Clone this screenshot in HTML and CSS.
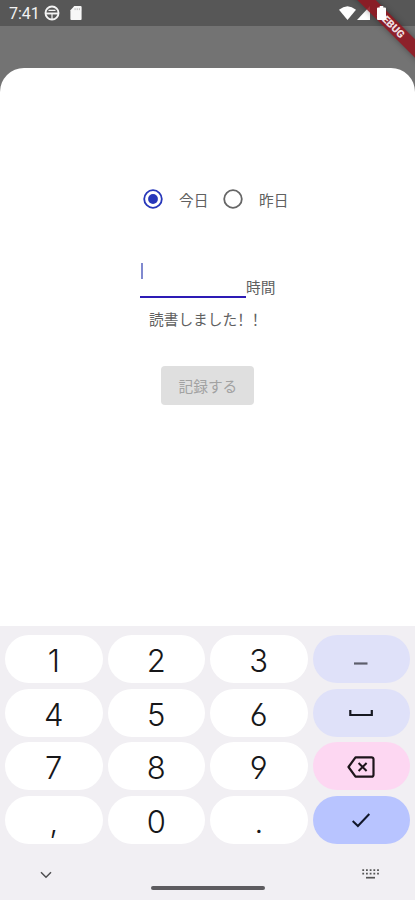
FILE: index.html
```html
<!DOCTYPE html>
<html lang="ja">
<head>
<meta charset="utf-8">
<meta name="viewport" content="width=device-width, initial-scale=1">
<title>読書記録</title>
<link rel="stylesheet" href="styles.css">
</head>
<body>
<div class="screen">
  <header class="status">
    <span class="clock">7:41</span>
    <svg class="globe" viewBox="0 0 16 16"><circle cx="8" cy="8" r="6.500" fill="none" stroke="#f4f4f4" stroke-width="1.900"/><path d="M1.500 8.500h13" stroke="#f4f4f4" stroke-width="1.900"/><path d="M4.500 5.300h7M8 9v5" stroke="#f4f4f4" stroke-width="1.200"/></svg>
    <svg class="sd" viewBox="0 0 12 15"><path d="M4.200 0H11a1 1 0 0 1 1 1v13a1 1 0 0 1-1 1H1a1 1 0 0 1-1-1V4.500z" fill="#f7f7f7"/><path d="M5 2.400v2M7.300 2.400v2M9.600 2.400v2" stroke="#b5b5b5" stroke-width="1"/></svg>
    <span class="space"></span>
    <svg class="wifi" viewBox="0 0 17 14"><path d="M8.500 14L0 3.800Q8.500-3.200 17 3.800z" fill="#fff"/></svg>
    <svg class="signal" viewBox="0 0 13 14"><path d="M13 0v14H0z" fill="#fff"/></svg>
    <svg class="battery" viewBox="0 0 9 14"><path d="M2.700 0h3.600v1.500H8a1 1 0 0 1 1 1V13a1 1 0 0 1-1 1H1a1 1 0 0 1-1-1V2.500a1 1 0 0 1 1-1h1.700z" fill="#fff"/></svg>
  </header>
  <div class="ribbon">DEBUG</div>
  <main class="sheet">
    <div class="days">
      <svg class="radio" viewBox="0 0 20 20"><circle cx="10" cy="10" r="8.800" fill="none" stroke="#2737ba" stroke-width="1.800"/><circle cx="10" cy="10" r="4.900" fill="#2737ba"/></svg>
      <span class="today">今日</span>
      <svg class="radio" viewBox="0 0 20 20"><circle cx="10" cy="10" r="8.800" fill="none" stroke="#666" stroke-width="1.800"/></svg>
      <span class="yesterday">昨日</span>
    </div>
    <div class="hours"><div class="field"><i class="caret"></i></div><span>時間</span></div>
    <p class="message">読書しました<span class="marks" lang="zh-CN">！！</span></p>
    <button class="record" disabled>記録する</button>
  </main>
  <section class="keyboard">
    <div class="keys">
      <span class="key">1</span><span class="key">2</span><span class="key">3</span>
      <span class="key side"><svg viewBox="0 0 98 48"><path d="M42 28.500h13.500" stroke="#5d5e6b" stroke-width="2.200"/></svg></span>
      <span class="key">4</span><span class="key">5</span><span class="key">6</span>
      <span class="key side"><svg viewBox="0 0 98 48"><path d="M38.300 21v5h21.500v-5" fill="none" stroke="#171821" stroke-width="2.200"/></svg></span>
      <span class="key">7</span><span class="key">8</span><span class="key">9</span>
      <span class="key erase"><svg viewBox="0 0 98 48"><path d="M43.500 15.300h16a2 2 0 0 1 2 2v15.400a2 2 0 0 1-2 2h-16L36.500 25z" fill="none" stroke="#1d151b" stroke-width="2.200" stroke-linejoin="round"/><path d="M46.600 21l8 8m0-8l-8 8" stroke="#1d151b" stroke-width="2"/></svg></span>
      <span class="key">,</span><span class="key">0</span><span class="key">.</span>
      <span class="key done"><svg viewBox="0 0 98 48"><path d="M40.700 25l5.200 5L57.300 18" fill="none" stroke="#11172b" stroke-width="2"/></svg></span>
    </div>
    <footer class="nav">
      <svg class="down" viewBox="0 0 12 8"><path d="M1 1.200l5 5 5-5" fill="none" stroke="#4e4e50" stroke-width="1.500"/></svg>
      <i class="home"></i>
      <svg class="board" viewBox="0 0 17 11"><path d="M.3 1.200h17M.3 4.700h17" stroke="#555" stroke-width="1.700" stroke-dasharray="1.800 1.900"/><path d="M4 8.700h9" stroke="#555" stroke-width="1.700"/></svg>
    </footer>
  </section>
</div>
</body>
</html>
```
FILE: styles.css
```css
* { box-sizing: border-box; }
body { margin: 0; }
.screen {
  position: relative;
  display: flex;
  flex-direction: column;
  width: 415px;
  height: 900px;
  overflow: hidden;
  background: #737373;
  color: #606060;
  font-family: Roboto, "Noto Sans CJK JP", sans-serif;
  font-size: 14.7px;
}
svg { display: block; flex: none; }
.status {
  display: flex;
  flex: none;
  align-items: center;
  height: 26px;
  margin-bottom: 42px;
  padding: 0 29px 0 9px;
  background: #575757;
}
.clock { width: 35px; color: #f2f2f2; font-size: 16px; line-height: 26px; padding-top: 1px; }
.globe { width: 16px; height: 16px; margin-right: 9.500px; }
.sd { width: 12px; height: 14px; }
.space { flex: 1; }
.wifi { width: 17px; height: 14px; }
.signal { width: 13px; height: 14px; margin-left: 1px; }
.battery { position: relative; z-index: 2; width: 9px; height: 14px; margin-left: 7px; }
.ribbon {
  position: absolute;
  z-index: 1;
  top: 18px;
  left: 329px;
  width: 124px;
  height: 13px;
  transform: rotate(45deg);
  background: rgba(145, 22, 32, 0.88);
  box-shadow: 0 0 6px rgba(0, 0, 0, 0.35);
  color: #f0dfe0;
  font-size: 10.500px;
  font-weight: 900;
  line-height: 13px;
  text-align: center;
}
.sheet {
  display: flex;
  flex: none;
  flex-direction: column;
  align-items: flex-start;
  height: 558px;
  padding-top: 121px;
  border-radius: 24px 24px 0 0;
  background: #fff;
}
.days { display: flex; align-items: center; height: 20px; padding-left: 143px; line-height: 20px; }
.radio { width: 20px; height: 20px; }
.today { width: 44px; margin-left: 16px; padding-top: 4px; }
.yesterday { margin-left: 16px; padding-top: 4px; }
.hours { display: flex; height: 43px; margin-top: 46px; padding-left: 140px; }
.hours span { padding-top: 23px; line-height: 20px; }
.field { width: 106px; height: 43px; padding: 8px 0 0 1px; border-bottom: 2px solid #2d1bb5; }
.caret { display: block; width: 2px; height: 16px; background: #8089cf; }
.message { height: 20px; margin: 11px 0 0 149px; line-height: 20px; }
.marks { font-family: "Noto Sans CJK SC", sans-serif; }
.record {
  width: 93px;
  height: 39px;
  margin: 37px 0 0 161.400px;
  padding: 0;
  border: 0;
  border-radius: 4px;
  background: #dfdfdf;
  color: #a2a2a2;
  font: inherit;
}
.keyboard { display: flex; flex: none; flex-direction: column; height: 274px; padding: 9px 5px 0; background: #f1eff3; }
.keys { display: grid; grid-template-columns: repeat(4, 1fr); grid-auto-rows: 48px; gap: 5.700px 5px; }
.key {
  display: flex;
  align-items: center;
  justify-content: center;
  min-width: 0;
  border-radius: 24px;
  background: #fff;
  color: #171719;
  font-family: Inter, sans-serif;
  font-size: 31px;
  font-weight: 300;
  font-feature-settings: "cv03", "cv04";
  line-height: 48px;
  padding-top: 4px;
}
.key svg { width: 98px; height: 48px; margin-top: -4px; }
.side { background: #dfe1f9; }
.erase { background: #fdd7f2; }
.done { background: #b8c4ff; }
.nav { display: flex; align-items: center; height: 46px; padding-left: 34.500px; margin-top: 7px; }
.down { width: 12px; height: 8px; margin-top: 2px; }
.home { width: 114px; height: 4px; margin: 28px 0 0 99px; border-radius: 2px; background: #5d5b5f; }
.board { width: 17px; height: 11px; margin: 1px 0 0 97px; }
```
